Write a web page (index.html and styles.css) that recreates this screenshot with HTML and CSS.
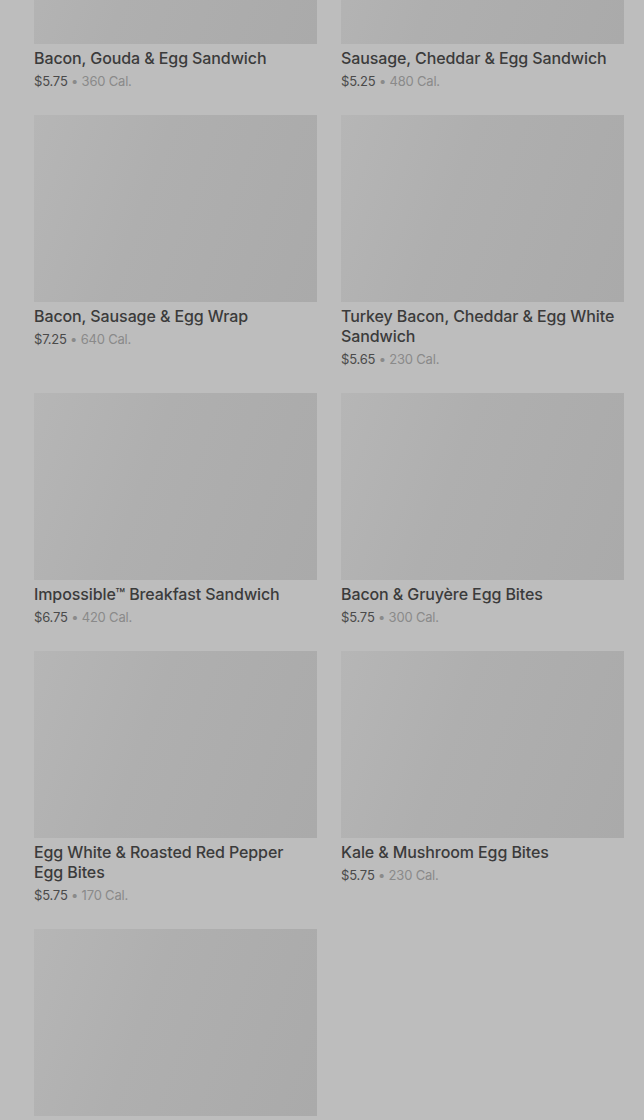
FILE: index.html
```html
<!DOCTYPE html>
<html lang="en">
<head>
    <meta charset="UTF-8">
    <title>Breakfast</title>
    <link rel="stylesheet" href="styles.css">
</head>
<body>
<div class="menu">
    <div class="item">
        <div class="pic"></div>
        <div class="name">Bacon, Gouda &amp; Egg Sandwich</div>
        <div class="info"><span class="price">$5.75</span> • 360 Cal.</div>
    </div>
    <div class="item">
        <div class="pic"></div>
        <div class="name">Sausage, Cheddar &amp; Egg Sandwich</div>
        <div class="info"><span class="price">$5.25</span> • 480 Cal.</div>
    </div>
    <div class="item">
        <div class="pic"></div>
        <div class="name">Bacon, Sausage &amp; Egg Wrap</div>
        <div class="info"><span class="price">$7.25</span> • 640 Cal.</div>
    </div>
    <div class="item">
        <div class="pic"></div>
        <div class="name">Turkey Bacon, Cheddar &amp; Egg White Sandwich</div>
        <div class="info"><span class="price">$5.65</span> • 230 Cal.</div>
    </div>
    <div class="item">
        <div class="pic"></div>
        <div class="name">Impossible™ Breakfast Sandwich</div>
        <div class="info"><span class="price">$6.75</span> • 420 Cal.</div>
    </div>
    <div class="item">
        <div class="pic"></div>
        <div class="name">Bacon &amp; Gruyère Egg Bites</div>
        <div class="info"><span class="price">$5.75</span> • 300 Cal.</div>
    </div>
    <div class="item">
        <div class="pic"></div>
        <div class="name">Egg White &amp; Roasted Red Pepper Egg Bites</div>
        <div class="info"><span class="price">$5.75</span> • 170 Cal.</div>
    </div>
    <div class="item">
        <div class="pic"></div>
        <div class="name">Kale &amp; Mushroom Egg Bites</div>
        <div class="info"><span class="price">$5.75</span> • 230 Cal.</div>
    </div>
    <div class="item">
        <div class="pic"></div>
    </div>
</div>
</body>
</html>
```

FILE: styles.css
```css
*{
    margin: 0;
    padding: 0;
    box-sizing: border-box;
}
html, body{
    background-color: #bdbdbd;
    height: 100%;
    overflow: hidden;
}
body{
    font-family: Inter, "Noto Sans", sans-serif;
}
.menu{
    display: grid;
    grid-template-columns: 283px 283px;
    column-gap: 24px;
    row-gap: 24px;
    padding: 0 20px 0 34px;
    margin-top: -143px;
}
.pic{
    height: 187px;
    background: linear-gradient(110deg, #b6b6b6 0%, #afafaf 40%, #aaaaaa 100%);
    margin-bottom: 4px;
}
.name{
    font-size: 16px;
    line-height: 20px;
    font-weight: 500;
    color: #3b3b3b;
    letter-spacing: -0.1px;
    padding-right: 6px;
}
.info{
    margin-top: 3px;
    font-size: 13px;
    line-height: 20px;
    color: #8a8a8a;
    letter-spacing: -0.2px;
}
.price{
    color: #4a4a4a;
}
```
